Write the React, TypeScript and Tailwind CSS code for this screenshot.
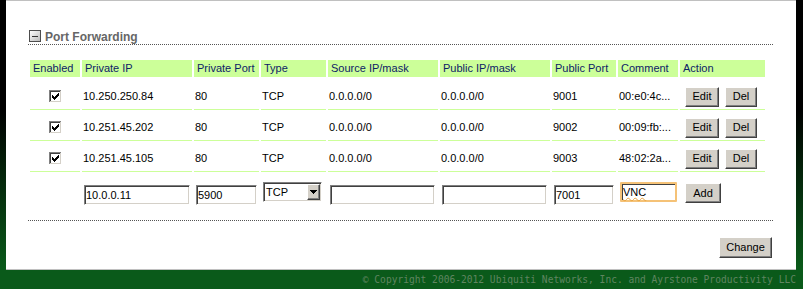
import React from "react";

const GRID =
  "grid grid-cols-[50px_110px_65px_65px_110px_110px_64px_60px_85px] gap-x-[2px]";

const headers = [
  "Enabled",
  "Private IP",
  "Private Port",
  "Type",
  "Source IP/mask",
  "Public IP/mask",
  "Public Port",
  "Comment",
  "Action",
];

const rows = [
  ["10.250.250.84", "80", "TCP", "0.0.0.0/0", "0.0.0.0/0", "9001", "00:e0:4c..."],
  ["10.251.45.202", "80", "TCP", "0.0.0.0/0", "0.0.0.0/0", "9002", "00:09:fb:..."],
  ["10.251.45.105", "80", "TCP", "0.0.0.0/0", "0.0.0.0/0", "9003", "48:02:2a..."],
];

const checkPixels: [number, number, number][] = [
  [9, 3, 1],
  [8, 4, 2],
  [3, 5, 1],
  [7, 5, 3],
  [3, 6, 2],
  [6, 6, 3],
  [3, 7, 5],
  [4, 8, 3],
  [5, 9, 1],
];

function Checkbox() {
  return (
    <svg width="13" height="13" viewBox="0 0 13 13" shapeRendering="crispEdges">
      <rect x="0" y="0" width="13" height="13" fill="#ffffff" />
      <rect x="0" y="0" width="12" height="1" fill="#808080" />
      <rect x="0" y="0" width="1" height="12" fill="#808080" />
      <rect x="1" y="1" width="10" height="1" fill="#404040" />
      <rect x="1" y="1" width="1" height="10" fill="#404040" />
      <rect x="1" y="11" width="11" height="1" fill="#d4d0c8" />
      <rect x="11" y="1" width="1" height="11" fill="#d4d0c8" />
      {checkPixels.map(([x, y, w], i) => (
        <rect key={i} x={x} y={y} width={w} height="1" fill="#000000" />
      ))}
    </svg>
  );
}

function MinusBox() {
  return (
    <svg width="12" height="12" viewBox="0 0 12 12" shapeRendering="crispEdges">
      <defs>
        <linearGradient id="mb" x1="0" y1="0" x2="1" y2="1">
          <stop offset="0" stopColor="#ffffff" />
          <stop offset="1" stopColor="#b8b8b8" />
        </linearGradient>
      </defs>
      <rect x="0.5" y="0.5" width="11" height="11" fill="url(#mb)" stroke="#4d4d4d" />
      <rect x="3" y="6" width="6" height="1" fill="#333333" />
    </svg>
  );
}

function WinButton({
  children,
  className,
}: {
  children: React.ReactNode;
  className: string;
}) {
  return (
    <button
      type="button"
      className={`bg-[#d4d0c8] border border-t-white border-l-white border-r-[#404040] border-b-[#404040] shadow-[inset_-1px_-1px_0_#808080] text-[11px] text-black leading-none flex items-center justify-center ${className}`}
    >
      {children}
    </button>
  );
}

const INSET =
  "h-[20px] bg-white border border-t-[#808080] border-l-[#808080] border-r-white border-b-white shadow-[inset_1px_1px_0_#404040,inset_-1px_-1px_0_#d4d0c8] text-[11px] text-black pl-[1px] outline-none font-['Liberation_Sans',Arial,sans-serif]";

function Field({ value, className }: { value: string; className: string }) {
  return <input readOnly value={value} className={`${INSET} ${className}`} />;
}

export default function App() {
  return (
    <div className="w-[803px] h-[289px] flex flex-col overflow-hidden bg-[linear-gradient(to_bottom,#000000_0%,#000000_38%,#0a5a1a_93%,#0a5a1a_100%)] font-['Liberation_Sans',Arial,sans-serif]">
      <div className="flex h-[270px]">
        <div className="w-[6px] shrink-0" />
        <main className="w-[790px] h-[270px] shrink-0 bg-white border-t border-b border-[#c0c0c0] pl-[22px] pt-[29px]">
          <div className="w-[745px]">
            <div className="flex items-start h-[15px] border-b border-dotted border-[#555555]">
              <div className="ml-[1px]">
                <MinusBox />
              </div>
              <h2 className="ml-[4px] text-[12px] leading-[14px] font-bold text-[#666666]">
                Port Forwarding
              </h2>
            </div>

            <div className={`${GRID} mt-[15px] pl-[2px]`}>
              {headers.map((h) => (
                <div
                  key={h}
                  className="h-[19px] border-b-2 border-white bg-[#ccff99] pl-[3px] flex items-center text-[11px] text-[#0c2266] whitespace-nowrap"
                >
                  {h}
                </div>
              ))}

              {rows.map((r, ri) => (
                <React.Fragment key={ri}>
                  <div className="h-[31px] border-b border-[#ccff99] pt-[5px] flex items-center justify-center">
                    <Checkbox />
                  </div>
                  {r.map((c, ci) => (
                    <div
                      key={ci}
                      className="h-[31px] border-b border-[#ccff99] pt-[5px] pl-[1px] flex items-center text-[11px] text-black whitespace-nowrap"
                    >
                      {c}
                    </div>
                  ))}
                  <div className="h-[31px] border-b border-[#ccff99] pt-[5px] pl-[5px] flex items-center gap-[6px]">
                    <WinButton className="w-[34px] h-[20px]">Edit</WinButton>
                    <WinButton className="w-[32px] h-[20px]">Del</WinButton>
                  </div>
                </React.Fragment>
              ))}

              <div className="h-[34px]" />
              <div className="h-[34px] pt-[10px] pl-[2px]">
                <Field value="10.0.0.11" className="w-[106px]" />
              </div>
              <div className="h-[34px] pt-[10px] pl-[2px]">
                <Field value="5900" className="w-[61px]" />
              </div>
              <div className="h-[34px] pt-[10px] pl-[2px]">
                <div className={`${INSET} w-[59px] flex items-center justify-between pr-[1px]`}>
                  <span className="pl-[1px]">TCP</span>
                  <span className="w-[13px] h-[16px] bg-[#d4d0c8] border border-t-white border-l-white border-r-[#404040] border-b-[#404040] shadow-[inset_-1px_-1px_0_#808080] flex items-center justify-center">
                    <svg width="7" height="4" viewBox="0 0 7 4" shapeRendering="crispEdges">
                      <rect x="0" y="0" width="7" height="1" fill="#000" />
                      <rect x="1" y="1" width="5" height="1" fill="#000" />
                      <rect x="2" y="2" width="3" height="1" fill="#000" />
                      <rect x="3" y="3" width="1" height="1" fill="#000" />
                    </svg>
                  </span>
                </div>
              </div>
              <div className="h-[34px] pt-[10px] pl-[2px]">
                <Field value="" className="w-[105px]" />
              </div>
              <div className="h-[34px] pt-[10px] pl-[2px]">
                <Field value="" className="w-[105px]" />
              </div>
              <div className="h-[34px] pt-[10px] pl-[2px]">
                <Field value="7001" className="w-[60px]" />
              </div>
              <div className="h-[34px] pt-[10px] pl-[2px]">
                <div className="w-[57px] h-[20px] border-2 border-[#f5c277] rounded-[1px] shadow-[inset_1px_1px_0_#404040] bg-white flex items-center pl-[1px] text-[11px] text-black">
                  <span className="underline decoration-wavy decoration-[#e8a33d] decoration-1 underline-offset-[1px]">
                    VNC
                  </span>
                </div>
              </div>
              <div className="h-[34px] pt-[11px] pl-[5px]">
                <WinButton className="w-[36px] h-[20px]">Add</WinButton>
              </div>
            </div>

            <div className="mt-[14px] border-t border-dotted border-[#555555]" />

            <div className="flex justify-end mt-[16px] pr-[1px]">
              <WinButton className="w-[53px] h-[21px]">Change</WinButton>
            </div>
          </div>
        </main>
        <div className="w-[7px] shrink-0" />
      </div>
      <footer className="h-[19px] flex items-center justify-end pr-[7px] bg-[#0a5a1a] text-[9.6px] leading-none text-[#5f8560] font-['DejaVu_Sans_Mono',monospace] whitespace-nowrap">
        © Copyright 2006-2012 Ubiquiti Networks, Inc. and Ayrstone Productivity LLC
      </footer>
    </div>
  );
}
